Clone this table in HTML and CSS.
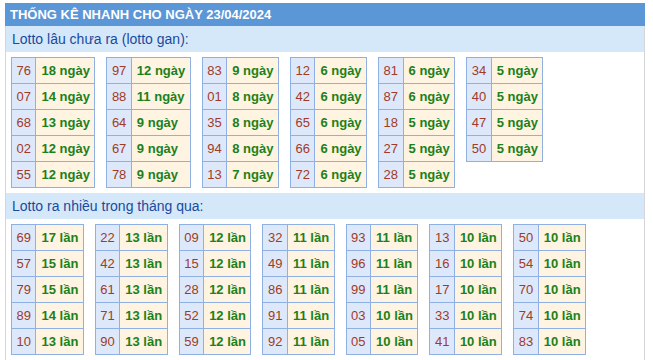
FILE: index.html
```html
<!DOCTYPE html>
<html lang="vi">
<head>
<meta charset="utf-8">
<title>Thống kê nhanh</title>
<link rel="stylesheet" href="styles.css">
</head>
<body>
<div class="wrap">
  <div class="title">THỐNG KÊ NHANH CHO NGÀY 23/04/2024</div>
  <div class="box">
    <div class="subhead">Lotto lâu chưa ra (lotto gan):</div>
    <div class="tables">
      <table class="lt"><tr><td class="n">76</td><td class="v">18 ngày</td></tr><tr><td class="n">07</td><td class="v">14 ngày</td></tr><tr><td class="n">68</td><td class="v">13 ngày</td></tr><tr><td class="n">02</td><td class="v">12 ngày</td></tr><tr><td class="n">55</td><td class="v">12 ngày</td></tr></table>
      <table class="lt"><tr><td class="n">97</td><td class="v">12 ngày</td></tr><tr><td class="n">88</td><td class="v">11 ngày</td></tr><tr><td class="n">64</td><td class="v">9 ngày</td></tr><tr><td class="n">67</td><td class="v">9 ngày</td></tr><tr><td class="n">78</td><td class="v">9 ngày</td></tr></table>
      <table class="lt"><tr><td class="n">83</td><td class="v">9 ngày</td></tr><tr><td class="n">01</td><td class="v">8 ngày</td></tr><tr><td class="n">35</td><td class="v">8 ngày</td></tr><tr><td class="n">94</td><td class="v">8 ngày</td></tr><tr><td class="n">13</td><td class="v">7 ngày</td></tr></table>
      <table class="lt"><tr><td class="n">12</td><td class="v">6 ngày</td></tr><tr><td class="n">42</td><td class="v">6 ngày</td></tr><tr><td class="n">65</td><td class="v">6 ngày</td></tr><tr><td class="n">66</td><td class="v">6 ngày</td></tr><tr><td class="n">72</td><td class="v">6 ngày</td></tr></table>
      <table class="lt"><tr><td class="n">81</td><td class="v">6 ngày</td></tr><tr><td class="n">87</td><td class="v">6 ngày</td></tr><tr><td class="n">18</td><td class="v">5 ngày</td></tr><tr><td class="n">27</td><td class="v">5 ngày</td></tr><tr><td class="n">28</td><td class="v">5 ngày</td></tr></table>
      <table class="lt"><tr><td class="n">34</td><td class="v">5 ngày</td></tr><tr><td class="n">40</td><td class="v">5 ngày</td></tr><tr><td class="n">47</td><td class="v">5 ngày</td></tr><tr><td class="n">50</td><td class="v">5 ngày</td></tr></table>
    </div>
    <div class="subhead">Lotto ra nhiều trong tháng qua:</div>
    <div class="tables">
      <table class="lt"><tr><td class="n">69</td><td class="v">17 lần</td></tr><tr><td class="n">57</td><td class="v">15 lần</td></tr><tr><td class="n">79</td><td class="v">15 lần</td></tr><tr><td class="n">89</td><td class="v">14 lần</td></tr><tr><td class="n">10</td><td class="v">13 lần</td></tr></table>
      <table class="lt"><tr><td class="n">22</td><td class="v">13 lần</td></tr><tr><td class="n">42</td><td class="v">13 lần</td></tr><tr><td class="n">61</td><td class="v">13 lần</td></tr><tr><td class="n">71</td><td class="v">13 lần</td></tr><tr><td class="n">90</td><td class="v">13 lần</td></tr></table>
      <table class="lt"><tr><td class="n">09</td><td class="v">12 lần</td></tr><tr><td class="n">15</td><td class="v">12 lần</td></tr><tr><td class="n">28</td><td class="v">12 lần</td></tr><tr><td class="n">52</td><td class="v">12 lần</td></tr><tr><td class="n">59</td><td class="v">12 lần</td></tr></table>
      <table class="lt"><tr><td class="n">32</td><td class="v">11 lần</td></tr><tr><td class="n">49</td><td class="v">11 lần</td></tr><tr><td class="n">86</td><td class="v">11 lần</td></tr><tr><td class="n">91</td><td class="v">11 lần</td></tr><tr><td class="n">92</td><td class="v">11 lần</td></tr></table>
      <table class="lt"><tr><td class="n">93</td><td class="v">11 lần</td></tr><tr><td class="n">96</td><td class="v">11 lần</td></tr><tr><td class="n">99</td><td class="v">11 lần</td></tr><tr><td class="n">03</td><td class="v">10 lần</td></tr><tr><td class="n">05</td><td class="v">10 lần</td></tr></table>
      <table class="lt"><tr><td class="n">13</td><td class="v">10 lần</td></tr><tr><td class="n">16</td><td class="v">10 lần</td></tr><tr><td class="n">17</td><td class="v">10 lần</td></tr><tr><td class="n">33</td><td class="v">10 lần</td></tr><tr><td class="n">41</td><td class="v">10 lần</td></tr></table>
      <table class="lt"><tr><td class="n">50</td><td class="v">10 lần</td></tr><tr><td class="n">54</td><td class="v">10 lần</td></tr><tr><td class="n">70</td><td class="v">10 lần</td></tr><tr><td class="n">74</td><td class="v">10 lần</td></tr><tr><td class="n">83</td><td class="v">10 lần</td></tr></table>
    </div>
  </div>
</div>
</body>
</html>
```
FILE: styles.css
```css
html, body {
  margin: 0;
  padding: 0;
  background: #ffffff;
}
body {
  font-family: "Liberation Sans", Arial, sans-serif;
}
.wrap {
  width: 640px;
  margin: 3px 0 0 5px;
}
.title {
  height: 23px;
  line-height: 23px;
  background: #5b96d6;
  color: #ffffff;
  font-weight: bold;
  font-size: 13px;
  padding-left: 5px;
  white-space: nowrap;
}
.box {
  border-left: 1px solid #d4d6da;
  border-right: 1px solid #d4d6da;
  padding-bottom: 6px;
}
.subhead {
  height: 26px;
  line-height: 26px;
  background: #d5e8fa;
  color: #1a4a9e;
  font-size: 14px;
  padding-left: 6px;
}
.tables {
  display: flex;
  align-items: flex-start;
  gap: 11px;
  padding: 5px 5px;
}
.lt {
  border-collapse: collapse;
  font-size: 13px;
}
.lt td {
  border: 1px solid #8eb0e2;
  height: 25px;
  line-height: 25px;
  white-space: nowrap;
  box-sizing: border-box;
  vertical-align: middle;
}
.lt .n {
  padding: 0 4.5px;
  background: #dde9fa;
  color: #a13a27;
}
.lt .v {
  padding: 0 4.5px 0 5px;
  background: #fff3e1;
  color: #1b811b;
  font-weight: bold;
}
```
